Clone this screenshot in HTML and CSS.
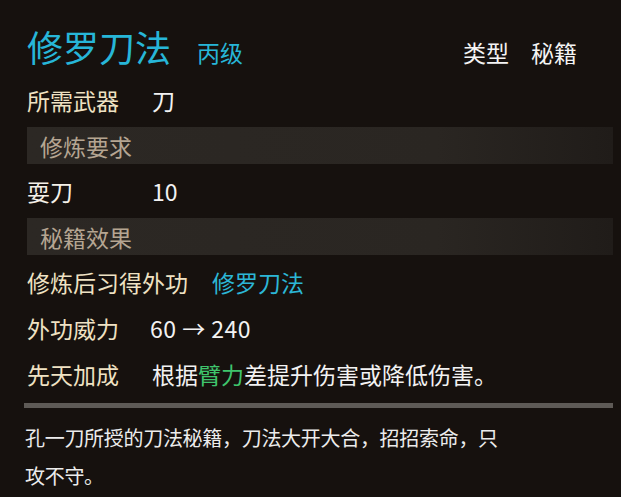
FILE: index.html
```html
<!DOCTYPE html>
<html lang="zh-CN">
<head>
<meta charset="utf-8">
<title>修罗刀法</title>
<link rel="stylesheet" href="styles.css">
</head>
<body>
<div class="panel">
  <header class="head">
    <h1 class="title">修罗刀法</h1>
    <span class="grade">丙级</span>
    <div class="type"><span>类型</span><span>秘籍</span></div>
  </header>
  <div class="row"><span class="label">所需武器</span><span class="val">刀</span></div>
  <div class="bar">修炼要求</div>
  <div class="row"><span class="label white">耍刀</span><span class="val">10</span></div>
  <div class="bar">秘籍效果</div>
  <div class="row"><span class="label">修炼后习得外功</span><span class="val cyan">修罗刀法</span></div>
  <div class="row"><span class="label">外功威力</span><span class="val num">60 → 240</span></div>
  <div class="row"><span class="label">先天加成</span><span class="val">根据<span class="green">臂力</span>差提升伤害或降低伤害。</span></div>
  <div class="divider"></div>
  <p class="desc">孔一刀所授的刀法秘籍，刀法大开大合，招招索命，只攻不守。</p>
</div>
</body>
</html>
```
FILE: styles.css
```css
html, body {
  margin: 0;
  padding: 0;
  background: #16110e;
}
body {
  width: 621px;
  height: 497px;
  overflow: hidden;
  font-family: "Noto Sans CJK SC", "Noto Sans", sans-serif;
  color: #efe2c3;
}
.panel {
  padding: 23px 8px 0 27px;
}
.head {
  display: flex;
  align-items: baseline;
  height: 46px;
  margin-bottom: 8px;
}
.title {
  margin: 0;
  font-size: 36px;
  font-weight: normal;
  line-height: 46px;
  color: #27b6d8;
}
.grade {
  margin-left: 26px;
  font-size: 23px;
  color: #27b6d8;
}
.type {
  margin-left: auto;
  margin-right: 36px;
  display: flex;
  gap: 22px;
  font-size: 23px;
  color: #f4f4f4;
}
.row {
  display: flex;
  align-items: center;
  gap: 28px;
  height: 46px;
  font-size: 23px;
}
.label {
  min-width: 97px;
  color: #efe2c3;
}
.label.white {
  color: #f4f0e8;
}
.val {
  color: #f2f2f2;
}
.num {
  letter-spacing: 0.5px;
  margin-left: -2px;
}
.cyan {
  color: #2cb6d6;
  margin-left: -4px;
}
.green {
  color: #3fc46c;
}
.bar {
  height: 37px;
  margin: 4px 0;
  padding-left: 13px;
  display: flex;
  align-items: center;
  font-size: 23px;
  color: #b5a592;
  background: linear-gradient(to right, #2c2824 0%, #2a2622 70%, #201c19 100%);
}
.divider {
  height: 5px;
  margin: 6px 0 0 -3px;
  background: #5e5a56;
}
.desc {
  width: 488px;
  margin: 11px 0 0 -2px;
  font-size: 20px;
  line-height: 38px;
  letter-spacing: -0.3px;
  color: #ececec;
}
```
